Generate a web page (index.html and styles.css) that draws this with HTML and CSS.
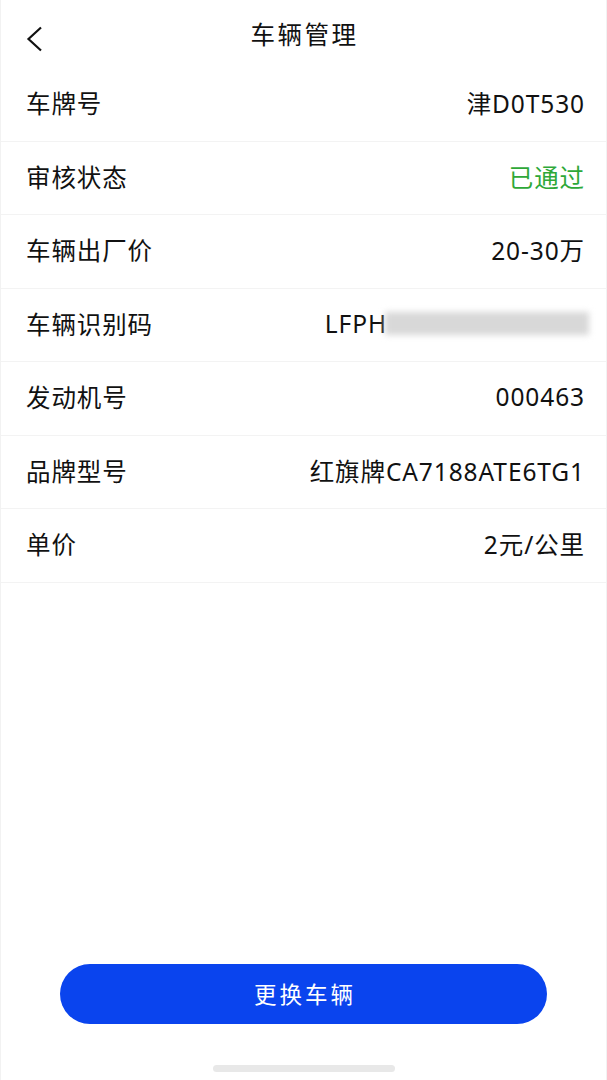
FILE: index.html
```html
<!DOCTYPE html>
<html lang="zh-CN">
<head>
  <meta charset="UTF-8" />
  <meta name="viewport" content="width=device-width, initial-scale=1.0"/>
  <title>车辆管理</title>
  <link rel="stylesheet" href="styles.css">
</head>
<body>
  <div class="page">
    <div class="header">
      <span class="back">
        <svg width="20" height="26" viewBox="0 0 20 26"><path d="M16 1.5 L3.5 13 L16 24.5" fill="none" stroke="#111" stroke-width="2.2"/></svg>
      </span>
      <h1>车辆管理</h1>
    </div>
    <div class="list">
      <div class="row"><span class="label">车牌号</span><span class="value">津D0T530</span></div>
      <div class="row"><span class="label">审核状态</span><span class="value ok">已通过</span></div>
      <div class="row"><span class="label">车辆出厂价</span><span class="value">20-30万</span></div>
      <div class="row"><span class="label">车辆识别码</span><span class="value vin">LFPH<span class="masked"></span></span></div>
      <div class="row"><span class="label">发动机号</span><span class="value">000463</span></div>
      <div class="row"><span class="label">品牌型号</span><span class="value">红旗牌CA7188ATE6TG1</span></div>
      <div class="row"><span class="label">单价</span><span class="value">2元/公里</span></div>
    </div>
    <div class="spacer"></div>
    <div class="footer">
      <button class="btn">更换车辆</button>
      <div class="home-bar"></div>
    </div>
  </div>
</body>
</html>
```

FILE: styles.css
```css
* { margin: 0; padding: 0; box-sizing: border-box; }
body {
  font-family: "Noto Sans", "Noto Sans CJK SC", sans-serif;
  background: #fff;
  color: #111;
}
.page {
  height: 1080px;
  display: flex;
  flex-direction: column;
  border-left: 1px solid #f2f2f2;
  border-right: 1px solid #f2f2f2;
}
.header {
  height: 68px;
  display: flex;
  align-items: center;
  justify-content: center;
  position: relative;
}
.header h1 {
  font-size: 24.5px;
  font-weight: normal;
  letter-spacing: 2.5px;
  margin: 0 0 1px 2px;
}
.back {
  position: absolute;
  left: 24px;
  top: 26px;
  display: flex;
}
.row {
  height: 73.5px;
  display: flex;
  align-items: center;
  justify-content: space-between;
  padding: 0 21px 3px 25px;
  border-bottom: 1px solid #f3f3f3;
  font-size: 24.5px;
  letter-spacing: 0.9px;
}
.value.ok { color: #2ea838; }
.vin {
  display: flex;
  align-items: center;
  margin-right: -4px;
}
.masked {
  display: inline-block;
  width: 204px;
  height: 23px;
  margin-left: -2px;
  background: #d8d8d8;
  filter: blur(3px);
}
.spacer { flex: 1; }
.footer {
  display: flex;
  flex-direction: column;
  align-items: center;
}
.btn {
  width: 487px;
  height: 60px;
  border: none;
  border-radius: 30px;
  background: #0a44ee;
  color: #fff;
  font-family: "Noto Sans CJK SC", sans-serif;
  font-size: 22.5px;
  letter-spacing: 3px;
  padding: 0 0 2px 3px;
}
.home-bar {
  width: 182px;
  height: 7px;
  border-radius: 4px;
  background: #e8e8e8;
  margin: 41px 0 8px;
}
```
